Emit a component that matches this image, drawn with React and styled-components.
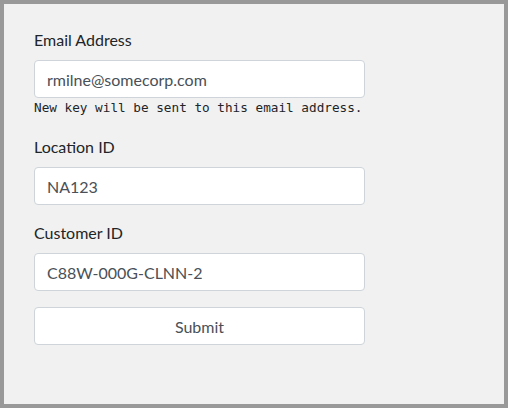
import React from 'react'
import styled, { createGlobalStyle } from 'styled-components'

const GlobalStyle = createGlobalStyle`
  html, body {
    margin: 0;
    padding: 0;
  }
  * {
    box-sizing: border-box;
  }
`

const Frame = styled.div`
  width: 508px;
  height: 408px;
  border: 4px solid #999999;
  background-color: #f1f1f1;
  padding: 24px 30px;
  font-family: 'Segoe UI', Lato, 'Noto Sans', sans-serif;
  color: #212529;
`

const StyledForm = styled.form`
  display: flex;
  flex-direction: column;
  width: 331px;
`

const Group = styled.div`
  display: flex;
  flex-direction: column;
  margin-bottom: ${({ $spacing }) => $spacing || 16}px;
`

const Label = styled.label`
  font-size: 16px;
  line-height: 24px;
  margin-bottom: 8px;
`

const Input = styled.input`
  height: 38px;
  padding: 6px 12px;
  border: 1px solid #ced4da;
  border-radius: 4px;
  background-color: #ffffff;
  font-family: inherit;
  font-size: 16px;
  color: #495057;
  outline: none;
`

const Hint = styled.small`
  font-family: 'DejaVu Sans Mono', 'Liberation Mono', monospace;
  font-size: 12.7px;
  line-height: 19px;
  color: #212529;
`

const SubmitButton = styled.button`
  height: 38px;
  border: 1px solid #ced4da;
  border-radius: 4px;
  background-color: #ffffff;
  font-family: inherit;
  font-size: 16px;
  color: #495057;
  cursor: pointer;
`

const fields = [
  { id: 'email', label: 'Email Address', value: 'rmilne@somecorp.com', hint: 'New key will be sent to this email address.' },
  { id: 'location', label: 'Location ID', value: 'NA123' },
  { id: 'customer', label: 'Customer ID', value: 'C88W-000G-CLNN-2' }
]

const Field = ({ id, label, value, hint }) => {
  return (
    <Group $spacing={hint ? 18 : 16}>
      <Label htmlFor={id}>{label}</Label>
      <Input id={id} type="text" defaultValue={value} />
      {hint && <Hint>{hint}</Hint>}
    </Group>
  )
}

const App = () => {
  return (
    <Frame>
      <GlobalStyle />
      <StyledForm onSubmit={e => e.preventDefault()}>
        {fields.map(field => (
          <Field key={field.id} {...field} />
        ))}
        <SubmitButton type="submit">Submit</SubmitButton>
      </StyledForm>
    </Frame>
  )
}

export default App
